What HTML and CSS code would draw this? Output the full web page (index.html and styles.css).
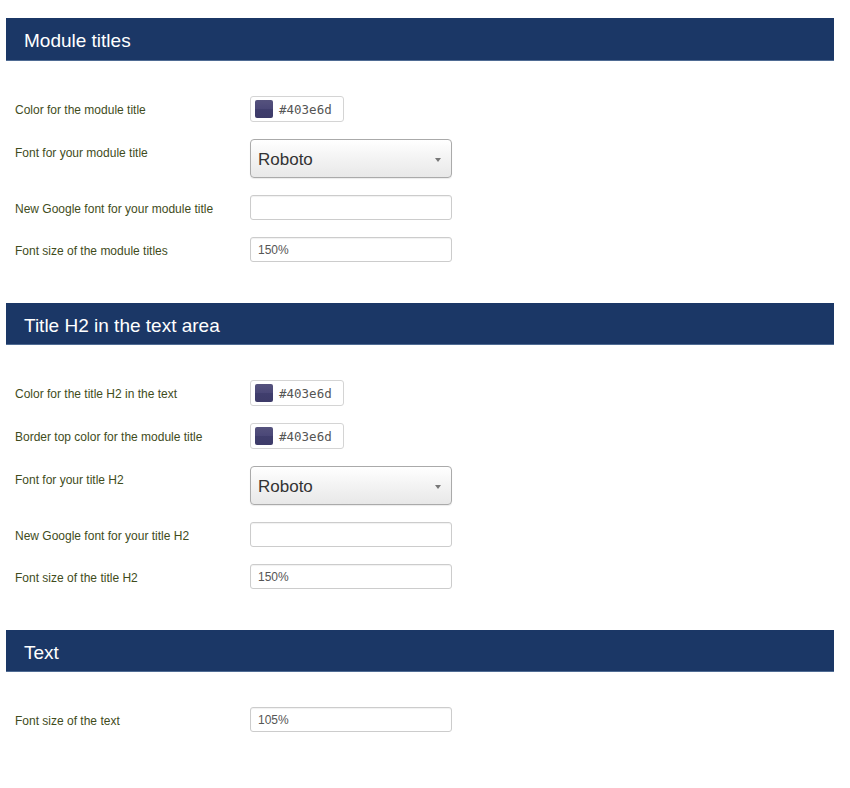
FILE: index.html
```html
<!DOCTYPE html>
<html lang="en">
<head>
    <meta charset="UTF-8">
    <meta name="viewport" content="width=device-width, initial-scale=1.0">
    <title>Template settings</title>
    <link rel="stylesheet" href="styles.css">
</head>
<body>
    <div class="settings">
        <section class="group">
            <h2 class="group-title">Module titles</h2>
            <div class="fields">
                <label class="field-label">Color for the module title</label>
                <div class="color-input">
                    <span class="swatch"></span>
                    <span class="hex">#403e6d</span>
                </div>

                <label class="field-label">Font for your module title</label>
                <div class="select">
                    <span>Roboto</span>
                    <span class="arrow"></span>
                </div>

                <label class="field-label">New Google font for your module title</label>
                <input type="text" class="text-input" value="">

                <label class="field-label">Font size of the module titles</label>
                <input type="text" class="text-input" value="150%">
            </div>
        </section>

        <section class="group">
            <h2 class="group-title">Title H2 in the text area</h2>
            <div class="fields">
                <label class="field-label">Color for the title H2 in the text</label>
                <div class="color-input">
                    <span class="swatch"></span>
                    <span class="hex">#403e6d</span>
                </div>

                <label class="field-label">Border top color for the module title</label>
                <div class="color-input">
                    <span class="swatch"></span>
                    <span class="hex">#403e6d</span>
                </div>

                <label class="field-label">Font for your title H2</label>
                <div class="select">
                    <span>Roboto</span>
                    <span class="arrow"></span>
                </div>

                <label class="field-label">New Google font for your title H2</label>
                <input type="text" class="text-input" value="">

                <label class="field-label">Font size of the title H2</label>
                <input type="text" class="text-input" value="150%">
            </div>
        </section>

        <section class="group">
            <h2 class="group-title">Text</h2>
            <div class="fields">
                <label class="field-label">Font size of the text</label>
                <input type="text" class="text-input" value="105%">
            </div>
        </section>
    </div>
</body>
</html>
```

FILE: styles.css
```css
body {
    margin: 0;
    background-color: #ffffff;
    font-family: 'Liberation Sans', Arial, sans-serif;
}
.settings {
    padding: 18px 16px 0 6px;
}
.group {
    margin-bottom: 41px;
}
.group-title {
    margin: 0 0 35px 0;
    height: 42px;
    line-height: 45px;
    padding-left: 18px;
    background-color: #1b3766;
    border-bottom: 1px solid #4f6b93;
    color: #ffffff;
    font-size: 19px;
    font-weight: normal;
}
.group + .group .group-title {
    height: 41px;
}
.fields {
    display: grid;
    grid-template-columns: 235px 202px;
    row-gap: 17px;
    padding-left: 9px;
    align-items: start;
}
.field-label {
    padding-top: 7px;
    line-height: 14px;
    font-size: 12px;
    color: #3f4c1c;
}
.color-input {
    width: 94px;
    height: 26px;
    box-sizing: border-box;
    border: 1px solid #d4d4d4;
    border-radius: 3px;
    display: flex;
    align-items: center;
    padding-left: 4px;
    gap: 6px;
}
.swatch {
    width: 18px;
    height: 18px;
    border-radius: 2px;
    background: linear-gradient(#55527d 0%, #4a4777 50%, #403e6d 50%, #3d3b69 100%);
}
.hex {
    font-family: 'DejaVu Sans Mono', 'Liberation Mono', monospace;
    font-size: 12.5px;
    color: #555555;
}
.select {
    height: 39px;
    box-sizing: border-box;
    border: 1px solid #aaaaaa;
    border-radius: 4px;
    background: linear-gradient(#ffffff 0%, #f3f3f3 50%, #e8e8e8 100%);
    box-shadow: 0 1px 1px rgba(0, 0, 0, 0.08);
    display: flex;
    align-items: center;
    justify-content: space-between;
    padding: 2px 10px 0 7px;
    font-size: 17px;
    color: #333333;
}
.arrow {
    width: 0;
    height: 0;
    border-left: 3px solid transparent;
    border-right: 3px solid transparent;
    border-top: 4px solid #777777;
}
.text-input {
    width: 202px;
    height: 25px;
    box-sizing: border-box;
    margin: 0;
    border: 1px solid #cccccc;
    border-radius: 3px;
    box-shadow: inset 0 1px 1px rgba(0, 0, 0, 0.06);
    padding: 0 7px;
    font-family: 'Liberation Sans', Arial, sans-serif;
    font-size: 12px;
    color: #555555;
}
```
